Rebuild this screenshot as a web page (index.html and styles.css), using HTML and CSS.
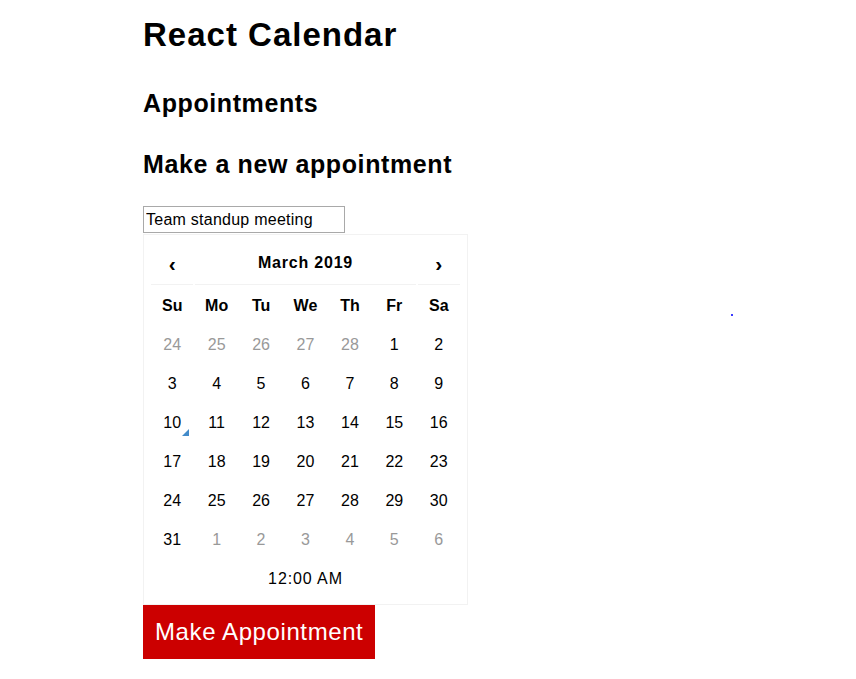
FILE: index.html
```html
<!DOCTYPE html>
<html>
<head>
<meta charset="utf-8">
<title>React Calendar</title>
<link rel="stylesheet" href="styles.css">
</head>
<body>
<div class="app">
  <h1 class="title">React Calendar</h1>
  <h2 class="section first">Appointments</h2>
  <h2 class="section second">Make a new appointment</h2>
  <form class="form">
    <input class="text-input" type="text" value="Team standup meeting">
    <div class="picker">
      <table class="cal">
        <thead>
          <tr class="nav">
            <th class="nav-cell prev"><span>‹</span></th>
            <th class="nav-cell switch" colspan="5">March 2019</th>
            <th class="nav-cell next"><span>›</span></th>
          </tr>
          <tr>
            <th class="dow">Su</th><th class="dow">Mo</th><th class="dow">Tu</th><th class="dow">We</th><th class="dow">Th</th><th class="dow">Fr</th><th class="dow">Sa</th>
          </tr>
        </thead>
        <tbody>
          <tr><td class="day old">24</td><td class="day old">25</td><td class="day old">26</td><td class="day old">27</td><td class="day old">28</td><td class="day">1</td><td class="day">2</td></tr>
          <tr><td class="day">3</td><td class="day">4</td><td class="day">5</td><td class="day">6</td><td class="day">7</td><td class="day">8</td><td class="day">9</td></tr>
          <tr><td class="day today">10</td><td class="day">11</td><td class="day">12</td><td class="day">13</td><td class="day">14</td><td class="day">15</td><td class="day">16</td></tr>
          <tr><td class="day">17</td><td class="day">18</td><td class="day">19</td><td class="day">20</td><td class="day">21</td><td class="day">22</td><td class="day">23</td></tr>
          <tr><td class="day">24</td><td class="day">25</td><td class="day">26</td><td class="day">27</td><td class="day">28</td><td class="day">29</td><td class="day">30</td></tr>
          <tr><td class="day">31</td><td class="day new">1</td><td class="day new">2</td><td class="day new">3</td><td class="day new">4</td><td class="day new">5</td><td class="day new">6</td></tr>
        </tbody>
        <tfoot>
          <tr><td class="time" colspan="7">12:00 AM</td></tr>
        </tfoot>
      </table>
    </div>
    <button class="submit" type="button">Make Appointment</button>
  </form>
  <span class="dot"></span>
</div>
</body>
</html>
```

FILE: styles.css
```css
html, body {
  margin: 0;
  padding: 0;
  background: #ffffff;
}

body {
  font-family: "Liberation Sans", Arial, sans-serif;
  color: #000000;
}

.app {
  padding: 16px 0 0 143px;
}

.title {
  margin: 0;
  font-size: 33px;
  letter-spacing: 1px;
  line-height: 37px;
  font-weight: bold;
}

.section {
  font-size: 25px;
  letter-spacing: 0.6px;
  line-height: 28px;
  font-weight: bold;
  margin: 0;
}

.section.first {
  margin-top: 36px;
}

.section.second {
  margin-top: 33px;
}

.form {
  margin-top: 28px;
  display: flex;
  flex-direction: column;
  align-items: flex-start;
}

.text-input {
  box-sizing: border-box;
  width: 202px;
  height: 27px;
  margin: 0;
  padding: 1px 2px;
  border: 1px solid #a9a9a9;
  font-family: "Liberation Sans", Arial, sans-serif;
  font-size: 16px;
  letter-spacing: 0.25px;
  color: #000000;
  outline: none;
}

.picker {
  box-sizing: border-box;
  width: 325px;
  margin-top: 1px;
  padding: 5px;
  border: 1px solid #f2f2f2;
  background: #ffffff;
}

.cal {
  width: 100%;
  border-collapse: separate;
  border-spacing: 2px;
  table-layout: fixed;
  font-size: 16px;
}

.cal th,
.cal td {
  padding: 0;
  text-align: center;
}

.nav-cell {
  height: 42px;
  border-bottom: 1px solid #f2f2f2;
  font-weight: bold;
  font-size: 16px;
}

.switch {
  letter-spacing: 0.8px;
}

.nav-cell span {
  font-size: 21px;
  line-height: 1;
  position: relative;
  top: 1px;
}

.dow {
  height: 37px;
  font-weight: bold;
}

.day {
  height: 37px;
  position: relative;
}

.day.old,
.day.new {
  color: #999999;
}

.day.today::before {
  content: "";
  position: absolute;
  right: 4px;
  bottom: 5px;
  border-left: 7px solid transparent;
  border-bottom: 7px solid #428bca;
}

.time {
  height: 37px;
  letter-spacing: 0.9px;
}

.submit {
  margin: 0;
  border: none;
  background: #cc0000;
  color: #ffffff;
  font-family: "Liberation Sans", Arial, sans-serif;
  font-size: 24px;
  letter-spacing: 0.6px;
  line-height: 28px;
  padding: 13px 12px;
  cursor: pointer;
}

.dot {
  position: absolute;
  left: 731px;
  top: 314px;
  width: 2px;
  height: 2px;
  background: #3a3aff;
}
```
